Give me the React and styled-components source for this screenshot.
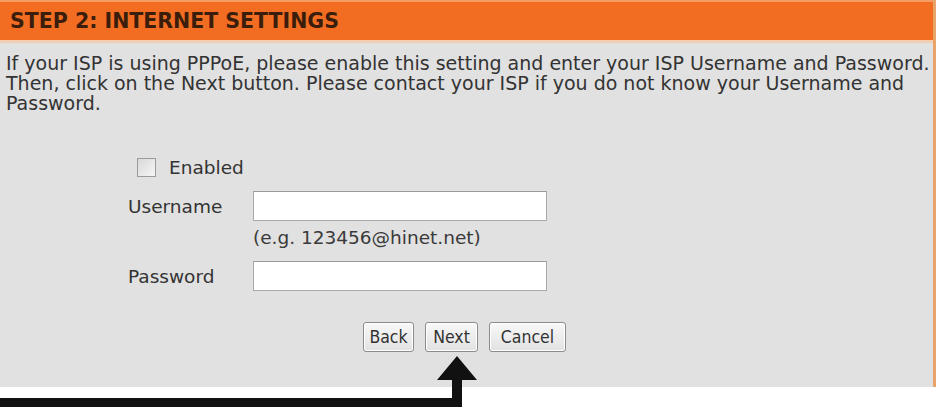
import React from 'react'
import styled, { createGlobalStyle } from 'styled-components'

const GlobalStyle = createGlobalStyle`
  body {
    margin: 0;
    background: #ffffff;
  }
`;

const Page = styled.div`
  position: relative;
  width: 940px;
  height: 412px;
  overflow: hidden;
  font-family: "DejaVu Sans", sans-serif;
  color: #333333;
`;

const Panel = styled.div`
  width: 933px;
  border-right: 3px solid #e9a46c;
`;

const Header = styled.div`
  height: 38px;
  border-top: 2px solid #f59c62;
  border-bottom: 3px solid #f3cdb2;
  background: #f26d22;
  display: flex;
  align-items: center;
  padding-left: 10px;
  font-weight: bold;
  font-size: 20.5px;
  color: #3b1d0c;
`;

const Body = styled.div`
  background: #e1e1e1;
  height: 334px;
  padding: 10px 0 0 6px;
`;

const Intro = styled.p`
  margin: 0;
  font-size: 19px;
  line-height: 20px;
  color: #333333;
`;

const FormGrid = styled.div`
  display: grid;
  grid-template-columns: 125px 294px;
  grid-template-rows: 39px 30px 40px 30px;
  margin: 39px 0 0 122px;
  font-size: 18.5px;
`;

const CheckRow = styled.label`
  grid-column: 1 / span 2;
  align-self: start;
  height: 30px;
  display: flex;
  align-items: center;
  gap: 13px;
  padding-left: 9px;
`;

const Box = styled.span`
  width: 19px;
  height: 19px;
  box-sizing: border-box;
  border: 1px solid #9a9a9a;
  background: linear-gradient(135deg, #d8d8d8, #f6f6f6);
`;

const Label = styled.span`
  align-self: center;
`;

const Field = styled.input`
  box-sizing: border-box;
  width: 294px;
  height: 30px;
  margin: 0;
  border: 1px solid #a9a9a9;
  border-top-color: #9a9a9a;
  background: #ffffff;
`;

const Hint = styled.span`
  grid-column: 2;
  padding-top: 6px;
  color: #3a3a3a;
`;

const ButtonRow = styled.div`
  display: flex;
  justify-content: center;
  gap: 11px;
  margin: 31px 0 0 -10px;
`;

const Button = styled.button`
  box-sizing: border-box;
  width: ${p => p.$w}px;
  height: 30px;
  padding: 0;
  font-family: "DejaVu Sans Condensed", "DejaVu Sans", sans-serif;
  font-size: 17.5px;
  color: #333333;
  background: linear-gradient(#f8f8f8, #e2e2e2);
  border: 1px solid #8c8c8c;
  border-radius: 3px;
  box-shadow: inset 0 0 0 1px #ffffff;
`;

const Arrow = styled.svg`
  position: absolute;
  left: 0;
  top: 0;
  pointer-events: none;
`;

export default function App() {
  return (
    <Page>
      <GlobalStyle />
      <Panel>
        <Header>STEP 2: INTERNET SETTINGS</Header>
        <Body>
          <Intro>
            If your ISP is using PPPoE, please enable this setting and enter your ISP Username and Password.
            Then, click on the Next button. Please contact your ISP if you do not know your Username and
            Password.
          </Intro>
          <FormGrid>
            <CheckRow>
              <Box />
              Enabled
            </CheckRow>
            <Label>Username</Label>
            <Field type="text" />
            <Hint>(e.g. 123456@hinet.net)</Hint>
            <Label>Password</Label>
            <Field type="password" />
          </FormGrid>
          <ButtonRow>
            <Button $w={51}>Back</Button>
            <Button $w={53}>Next</Button>
            <Button $w={77}>Cancel</Button>
          </ButtonRow>
        </Body>
      </Panel>
      <Arrow width="940" height="412" viewBox="0 0 940 412">
        <path d="M0 398 H452 V380 H437 L457 356 L477 380 H462 V407 H0 Z" fill="#111111" />
      </Arrow>
    </Page>
  );
}
